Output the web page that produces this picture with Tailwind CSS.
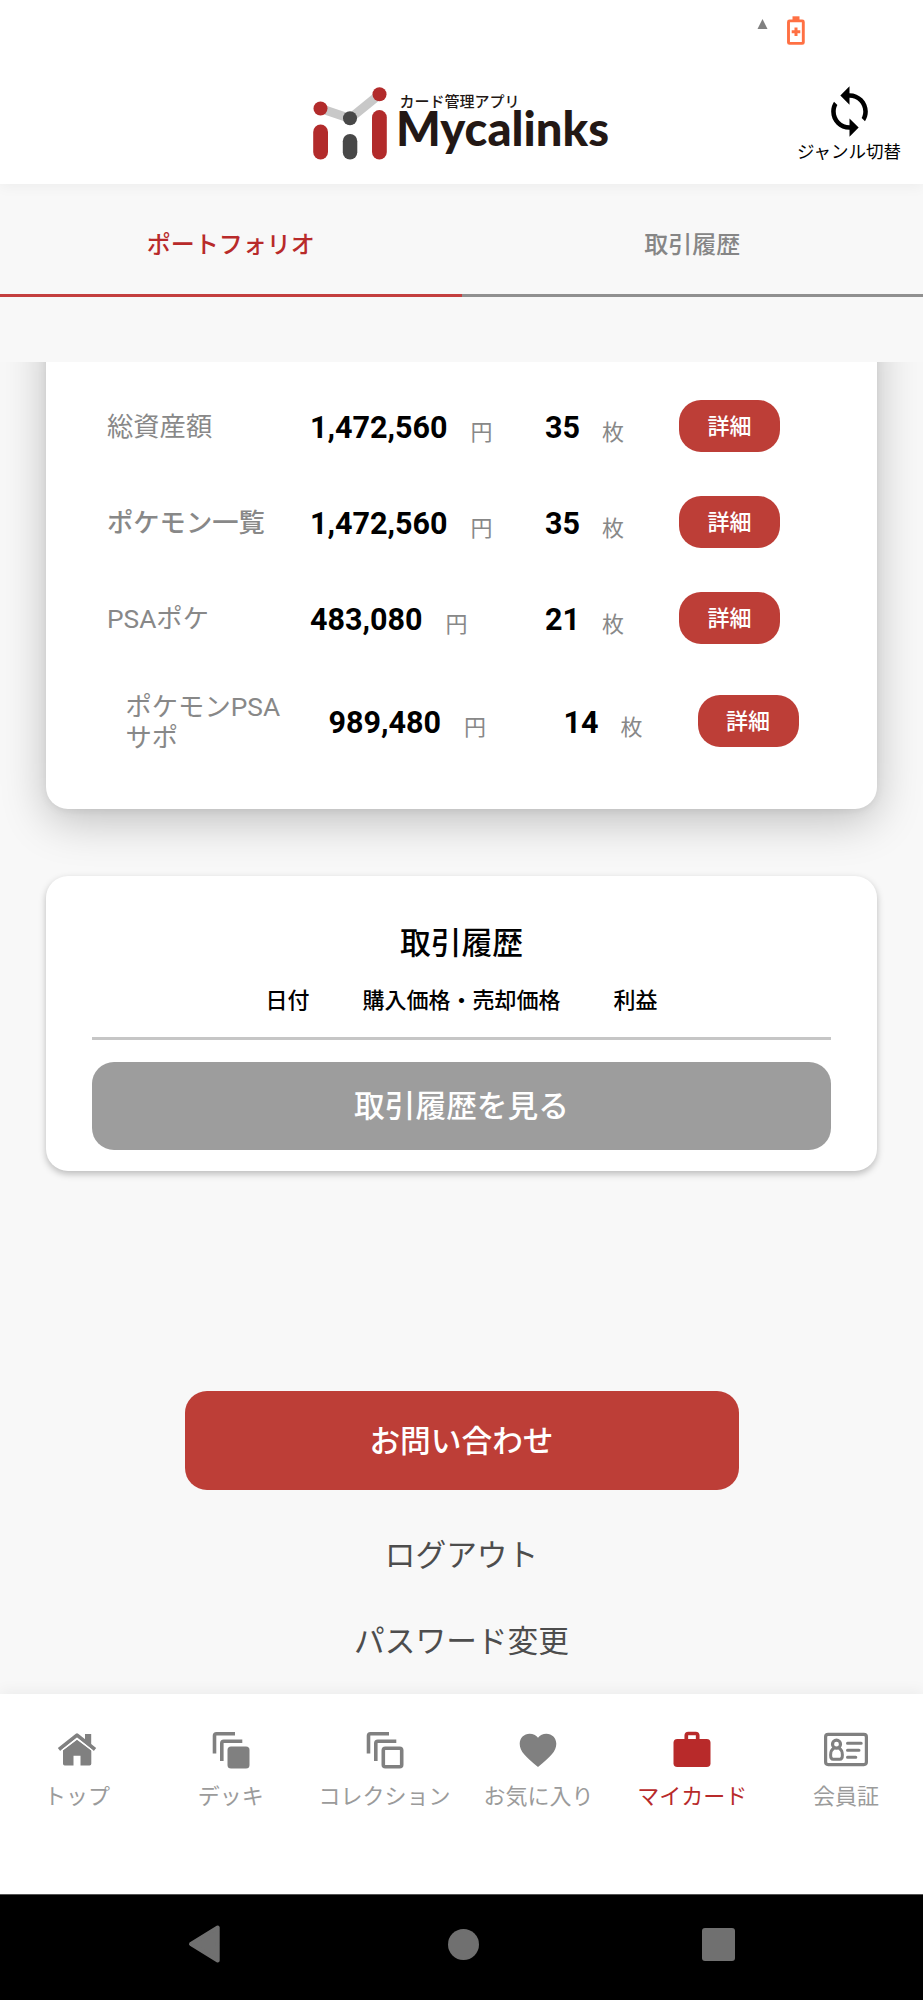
<!DOCTYPE html>
<html lang="ja">
<head>
<meta charset="utf-8">
<title>Mycalinks</title>
<script src="https://cdn.jsdelivr.net/npm/@tailwindcss/browser@4"></script>
</head>
<body class="w-[923px] h-[2000px] overflow-hidden flex flex-col bg-[#f8f8f8] font-['Roboto','Noto_Sans_CJK_JP',sans-serif] text-black">

<!-- Status bar and header -->
<header class="relative z-20 h-[184px] shrink-0 bg-white shadow-[0_2px_14px_rgba(0,0,0,0.05)]">
  <div class="h-[60px] flex items-start pl-[757px] pt-4 gap-[19px]">
    <svg class="mt-[3px]" width="11" height="10" viewBox="0 0 11 10"><path d="M5.500 0L10.500 10H.5z" fill="#808080"/></svg>
    <svg width="18" height="29" viewBox="0 0 18 29"><path d="M5.500 .3h7v4H5.500z" fill="#ff7043"/><rect x="1.500" y="4.900" width="14.800" height="22.500" rx="1" fill="none" stroke="#ff7043" stroke-width="2.900"/><path d="M9 11.500v8.600M4.700 15.800h8.600" stroke="#ff7043" stroke-width="3"/></svg>
  </div>
  <div class="flex items-start">
    <svg class="ml-[300px] mt-[10px]" width="320" height="100" viewBox="0 0 320 100">
      <path d="M20.500 38.500L50 48.500L79.500 24.500" fill="none" stroke="#c8c8c8" stroke-width="9"/>
      <circle cx="20.500" cy="38.500" r="7" fill="#b22b2b"/><circle cx="50" cy="48.300" r="7" fill="#484848"/><circle cx="79.500" cy="24.300" r="7" fill="#b22b2b"/>
      <rect x="13.200" y="54.500" width="14.800" height="35" rx="7.400" fill="#b22b2b"/><rect x="42.800" y="64" width="14.500" height="25.500" rx="7.250" fill="#484848"/><rect x="72" y="40" width="14.800" height="49.500" rx="7.400" fill="#b22b2b"/>
      <text x="99.500" y="36.500" font-size="15" font-weight="500" fill="#231815" textLength="120" font-family="Noto Sans CJK JP, sans-serif">カード管理アプリ</text>
      <text x="96" y="76" font-size="47" font-weight="900" fill="#231815" textLength="213" lengthAdjust="spacingAndGlyphs" font-family="Lato, sans-serif">Mycalinks</text>
    </svg>
    <div class="ml-[176px] mt-[24px] w-[106px] flex flex-col items-center">
      <svg width="55" height="55" viewBox="0 0 24 24"><path d="M12 4V1L8 5l4 4V6c3.310 0 6 2.690 6 6 0 1.010-.25 1.970-.7 2.800l1.460 1.460C19.540 15.030 20 13.570 20 12c0-4.420-3.580-8-8-8zm0 14c-3.310 0-6-2.690-6-6 0-1.010.25-1.970.7-2.800L5.240 7.740C4.460 8.970 4 10.430 4 12c0 4.420 3.580 8 8 8v3l4-4-4-4v3z"/></svg>
      <span class="mt-[2px] text-[17.500px] leading-[22px] whitespace-nowrap">ジャンル切替</span>
    </div>
  </div>
</header>

<!-- Tabs -->
<nav class="relative z-10 h-[178px] shrink-0 bg-[#f8f8f8]">
  <div class="grid grid-cols-2 text-[24px] font-medium text-center leading-[96px]">
    <div class="h-[113px] pt-[13px] border-b-3 border-[#c43f3f] text-[#b82a2a]">ポートフォリオ</div>
    <div class="h-[113px] pt-[13px] border-b-3 border-[#909090] text-[#868686]">取引履歴</div>
  </div>
</nav>

<!-- Scrolling content -->
<main class="h-[1332px] shrink-0 overflow-hidden">
  <section class="-mt-[60px] h-[507px] mx-[46px] rounded-[22px] bg-white shadow-[0_12px_46px_rgba(0,0,0,0.23),0_2px_8px_rgba(0,0,0,0.07)] pt-[76px] pl-[61px] flex flex-col text-[#888]">
    <div class="h-[96px] flex items-center">
      <div class="w-[203px] pt-[4px] text-[26.300px]">総資産額</div>
      <div class="w-[235px] pt-[4px] flex items-baseline gap-[23px]"><b class="text-[30.500px] text-black">1,472,560</b><span class="text-[22px] translate-y-[2px]">円</span></div>
      <div class="w-[134px] pt-[4px] flex items-baseline gap-[22px]"><b class="text-[30.500px] text-black">35</b><span class="text-[22px] translate-y-[2px]">枚</span></div>
      <button class="w-[101px] h-[52px] rounded-[22px] bg-[#bd3e37] text-white text-[22px] font-medium">詳細</button>
    </div>
    <div class="h-[96px] flex items-center">
      <div class="w-[203px] pt-[4px] text-[26.300px] font-medium">ポケモン一覧</div>
      <div class="w-[235px] pt-[4px] flex items-baseline gap-[23px]"><b class="text-[30.500px] text-black">1,472,560</b><span class="text-[22px] translate-y-[2px]">円</span></div>
      <div class="w-[134px] pt-[4px] flex items-baseline gap-[22px]"><b class="text-[30.500px] text-black">35</b><span class="text-[22px] translate-y-[2px]">枚</span></div>
      <button class="w-[101px] h-[52px] rounded-[22px] bg-[#bd3e37] text-white text-[22px] font-medium">詳細</button>
    </div>
    <div class="h-[96px] flex items-center">
      <div class="w-[203px] pt-[4px] text-[26.300px]">PSAポケ</div>
      <div class="w-[235px] pt-[4px] flex items-baseline gap-[23px]"><b class="text-[30.500px] text-black">483,080</b><span class="text-[22px] translate-y-[2px]">円</span></div>
      <div class="w-[134px] pt-[4px] flex items-baseline gap-[22px]"><b class="text-[30.500px] text-black">21</b><span class="text-[22px] translate-y-[2px]">枚</span></div>
      <button class="w-[101px] h-[52px] rounded-[22px] bg-[#bd3e37] text-white text-[22px] font-medium">詳細</button>
    </div>
    <div class="h-[110px] pl-[18.500px] flex items-center">
      <div class="w-[203px] pt-[3px] text-[26.300px] leading-[30.500px]">ポケモンPSA<br>サポ</div>
      <div class="w-[235px] pt-[4px] flex items-baseline gap-[23px]"><b class="text-[30.500px] text-black">989,480</b><span class="text-[22px] translate-y-[2px]">円</span></div>
      <div class="w-[134px] pt-[4px] flex items-baseline gap-[22px]"><b class="text-[30.500px] text-black">14</b><span class="text-[22px] translate-y-[2px]">枚</span></div>
      <button class="w-[101px] h-[52px] rounded-[22px] bg-[#bd3e37] text-white text-[22px] font-medium">詳細</button>
    </div>
  </section>

  <section class="mt-[67px] h-[295px] mx-[46px] px-[46px] pt-[44px] rounded-[22px] bg-white shadow-[0_3px_7px_rgba(0,0,0,0.25)] flex flex-col">
    <h2 class="h-[48px] text-[30.800px] leading-[48px] font-medium text-center">取引履歴</h2>
    <div class="mt-[18px] h-[30px] leading-[30px] flex justify-center gap-[53px] text-[22px] font-medium"><span>日付</span><span>購入価格・売却価格</span><span>利益</span></div>
    <div class="mt-[21px] h-[3px] bg-[#c6c6c6]"></div>
    <button class="mt-[22px] h-[88px] pt-[3px] shrink-0 rounded-[22px] bg-[#9d9d9d] text-white text-[30.700px] font-medium">取引履歴を見る</button>
  </section>

  <div class="mt-[220px] flex flex-col items-center text-[30.700px] text-[#4d4d4d]">
    <button class="w-[554px] h-[99px] pt-[4px] rounded-[22px] bg-[#bd3e37] text-white font-medium">お問い合わせ</button>
    <a class="mt-[42px] leading-[48px]">ログアウト</a>
    <a class="mt-[38px] leading-[48px]">パスワード変更</a>
  </div>
</main>

<!-- Bottom navigation -->
<nav class="relative z-10 h-[200px] shrink-0 bg-white shadow-[0_-3px_14px_rgba(0,0,0,0.05)] grid grid-cols-6 pt-[29px] text-[22px] leading-[30px] text-[#9b9b9b] text-center whitespace-nowrap">
  <div class="flex flex-col items-center gap-[13px]">
    <svg width="46" height="46" viewBox="0 0 46 46" fill="#808080"><path d="M5 26.500L23 12.300L41 26.500" fill="none" stroke="#808080" stroke-width="3.800" stroke-linejoin="round"/><path d="M31 11h6.200v12L31 18z"/><path d="M9 27.300L23 16.800l14.300 10.500v13.500q0 1.700-1.700 1.700H26.500v-9.700h-7v9.700h-8.800Q9 42.500 9 40.800z" /><path d="M7 28L23 15.400L39 28" fill="none" stroke="#fff" stroke-width="1.300"/></svg>
    <span>トップ</span>
  </div>
  <div class="flex flex-col items-center gap-[13px]">
    <svg width="46" height="46" viewBox="0 0 46 46" fill="none" stroke="#808080" stroke-width="3.600"><path d="M6.500 30.500V12.700q0-2 2-2H27M13.800 38V20.200q0-2 2-2H34.300"/><rect x="19.500" y="23.500" width="22" height="22" rx="3.500" fill="#808080" stroke="none"/></svg>
    <span>デッキ</span>
  </div>
  <div class="flex flex-col items-center gap-[13px]">
    <svg width="46" height="46" viewBox="0 0 46 46" fill="none" stroke="#808080" stroke-width="3.600"><path d="M6.500 30.500V12.700q0-2 2-2H27M13.800 38V20.200q0-2 2-2H34.300"/><rect x="21.300" y="25.300" width="18.400" height="18.400" rx="2"/></svg>
    <span>コレクション</span>
  </div>
  <div class="flex flex-col items-center gap-[13px]">
    <svg width="46" height="46" viewBox="0 0 46 46" fill="#808080"><path d="M23 44C11 34 4.700 28.500 4.700 20.700C4.700 15 9 10.700 14.700 10.700C18 10.700 21 12.300 23 14.700C25 12.300 28 10.700 31.300 10.700C37 10.700 41.300 15 41.300 20.700C41.300 28.500 35 34 23 44z"/></svg>
    <span>お気に入り</span>
  </div>
  <div class="flex flex-col items-center gap-[13px] text-[#b82a2a]">
    <svg width="46" height="46" viewBox="0 0 46 46" fill="#b82a2a"><rect x="4.500" y="16" width="37" height="28" rx="3.800"/><path d="M17.300 18v-5.500q0-2 2-2h7.400q2 0 2 2V18" fill="none" stroke="#b82a2a" stroke-width="3.700"/></svg>
    <span>マイカード</span>
  </div>
  <div class="flex flex-col items-center gap-[13px]">
    <svg width="46" height="46" viewBox="0 0 46 46" fill="none" stroke="#808080" stroke-width="3.200"><rect x="2.600" y="11.400" width="40.800" height="30.200" rx="2.500"/><circle cx="13.500" cy="21.200" r="4"/><path d="M10.600 25.200q-3 2-3 6.800q0 4.300 2.500 4.300h6.800q2.500 0 2.500-4.300q0-4.800-3-6.800M24.500 20.200h13.700M24.500 27.200h11.500M24.500 34.200h8.300" stroke-width="3" stroke-linecap="round"/></svg>
    <span>会員証</span>
  </div>
</nav>

<!-- Android system buttons -->
<footer class="h-[106px] shrink-0 bg-black border-t border-[#555] flex items-center justify-between px-[188px] pb-[7px]">
  <svg width="36" height="42" viewBox="0 0 36 42"><path d="M3 21L29.700 4.500V37.500z" fill="#707070" stroke="#707070" stroke-width="4" stroke-linejoin="round"/></svg>
  <div class="w-[31px] h-[31px] rounded-full bg-[#707070]"></div>
  <div class="w-[33px] h-[33px] rounded-[3px] bg-[#707070]"></div>
</footer>
</body>
</html>
